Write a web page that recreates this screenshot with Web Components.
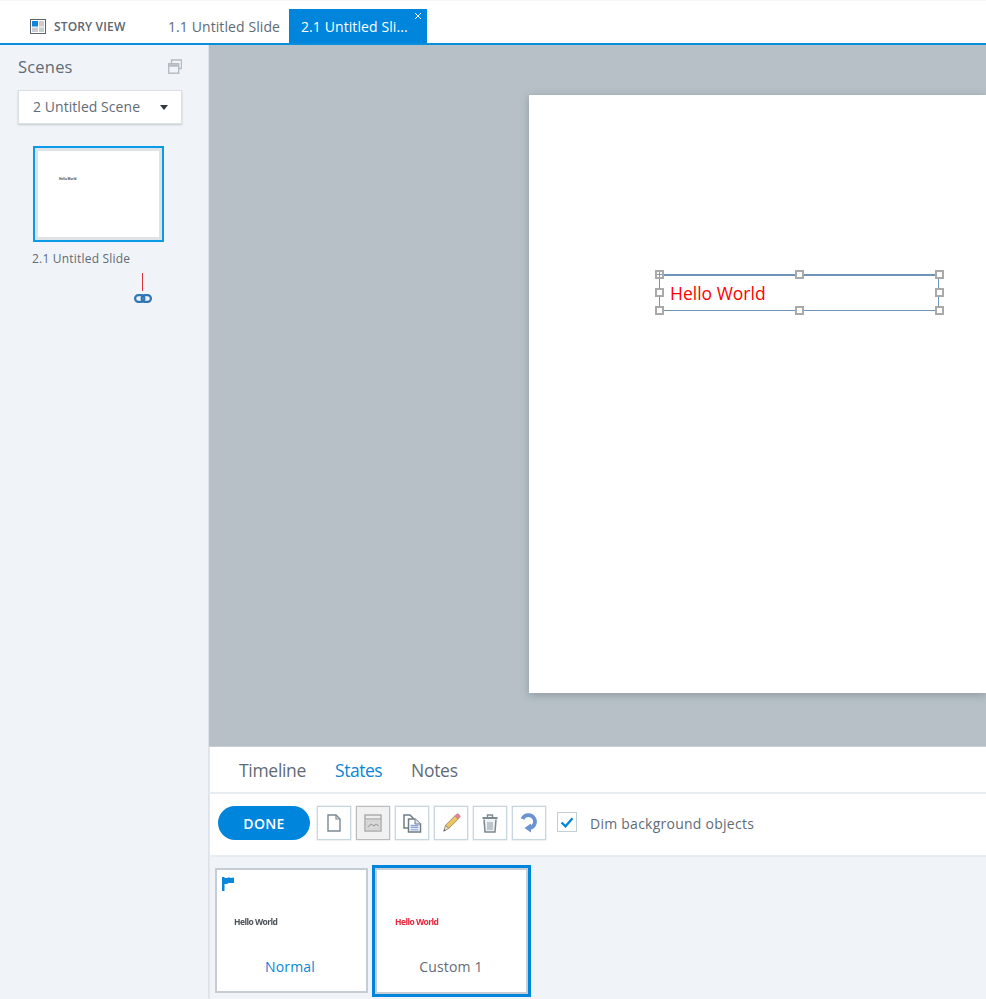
<!doctype html>
<html>
<head>
<meta charset="utf-8">
<style>
html,body{margin:0;height:100%;overflow:hidden;}
body{font-family:"Open Sans","Noto Sans",sans-serif;color:#5f6b76;background:#fff;}
story-app{width:986px;height:999px;}
</style>
</head>
<body>
<story-app>
  <story-tabs slot="tabs"></story-tabs>
  <scene-panel slot="side"></scene-panel>
  <slide-stage slot="stage"></slide-stage>
  <states-panel slot="bottom"></states-panel>
</story-app>

<script>
let define= (name,html)=>{
  customElements.define(name,class extends HTMLElement{
    constructor(){
      super();
      this.attachShadow({mode:"open"});
      let t= document.createElement("template");
      t.innerHTML= html;
      this.shadowRoot.append(t.content.cloneNode(true));
    }
  });
};

define("story-app",`
<style>
:host{display:grid;grid-template-columns:209px 1fr;grid-template-rows:45px 701px 1fr;}
</style>
<slot name="tabs"></slot>
<slot name="side"></slot>
<slot name="stage"></slot>
<slot name="bottom"></slot>
`);

define("story-tabs",`
<style>
:host{display:flex;grid-column:1/3;height:43px;border-bottom:2px solid #0a8fdf;align-items:flex-end;background:#fff;box-shadow:inset 0 1px 0 #f4f6f8;}
.story{display:flex;align-items:center;gap:8px;height:34px;margin-left:30px;width:138px;font-size:12px;font-weight:600;color:#5a6670;white-space:nowrap;letter-spacing:.15px;}
.tab{height:34px;display:flex;align-items:center;font-size:14px;white-space:nowrap;letter-spacing:.09px;}
.off{width:121px;}
.on{width:126px;padding-left:12px;background:#0085dd;color:#fff;position:relative;}
.x{position:absolute;right:5px;top:3px;width:8px;height:8px;}
svg{display:block;}
</style>
<div class="story">
<svg width="16" height="15" viewBox="0 0 16 15"><rect x=".5" y=".5" width="15" height="14" fill="#fff" stroke="#5c6268"/><rect x="2" y="2" width="6" height="5.500" fill="#0b86dc"/><rect x="9" y="2" width="5" height="5.500" fill="#c9cdd1"/><rect x="2" y="8.500" width="6" height="4.500" fill="#c9cdd1"/><rect x="9" y="8.500" width="5" height="4.500" fill="#c9cdd1"/></svg>
<span>STORY VIEW</span>
</div>
<div class="tab off">1.1 Untitled Slide</div>
<div class="tab on">2.1 Untitled Sli...
<svg class="x" viewBox="0 0 8 8"><path d="M1 1l6 6M7 1L1 7" stroke="#fff" stroke-width="1" fill="none"/></svg>
</div>
`);

define("scene-panel",`
<style>
:host{display:block;grid-row:2/4;background:#f0f4f8;box-shadow:inset -1px 0 0 #dde3e8;padding-top:9px;box-sizing:border-box;}
.head{display:flex;justify-content:space-between;align-items:center;height:24px;padding:0 27px 0 18px;font-size:16.500px;letter-spacing:.2px;}
.drop{display:flex;justify-content:space-between;align-items:center;margin:12px 27px 0 18px;height:34px;box-sizing:border-box;padding:0 13px 1px 14px;background:#fff;border:1px solid #dbe0e4;box-shadow:0 1px 2px rgba(90,100,110,.3);font-size:14px;letter-spacing:.05px;}
.arrow{width:0;height:0;border:4.500px solid transparent;border-top:5px solid #33383d;border-bottom:0;margin-top:2px;}
.thumb{margin:22px 0 0 33px;width:131px;height:96px;box-sizing:border-box;border:2px solid #0a9be8;background:#fff;box-shadow:inset 0 0 0 3px #dfe3e6;padding:29px 0 0 24px;}
.thumb span{display:block;font-size:3px;line-height:4px;font-weight:700;color:#444;white-space:nowrap;}
.name{margin:9px 0 0 32px;font-size:12px;line-height:16px;letter-spacing:.2px;white-space:nowrap;}
.link{margin:6px 0 0 134px;width:18px;}
.line{width:1px;height:18px;background:#d9303a;margin:0 0 3px 8px;}
svg{display:block;}
</style>
<div class="head"><span>Scenes</span>
<svg width="14" height="15" viewBox="0 0 14 15" fill="none"><path d="M3.500 4V1h10v8.500H11" stroke="#b4bbc2" stroke-width="1.400"/><rect x=".7" y="4.700" width="10" height="9.500" fill="#f0f4f8" stroke="#b4bbc2" stroke-width="1.400"/><path d="M1 6.500h9.500" stroke="#b4bbc2" stroke-width="2.500"/></svg>
</div>
<div class="drop"><span>2 Untitled Scene</span><i class="arrow"></i></div>
<div class="thumb"><span>Hello World</span></div>
<div class="name">2.1 Untitled Slide</div>
<div class="link"><div class="line"></div>
<svg width="18" height="9" viewBox="0 0 18 9" fill="none" stroke="#2e75b6" stroke-width="2.200"><rect x="1.100" y="1.100" width="9.300" height="6.800" rx="3.400"/><rect x="7.600" y="1.100" width="9.300" height="6.800" rx="3.400"/></svg>
</div>
`);

define("sel-handle",`
<style>
:host{position:absolute;width:5px;height:5px;border:2px solid #a9a9a9;background:#fff;margin:-4px 0 0 -4px;left:var(--x);top:var(--y);}
:host([cross]){background:linear-gradient(#7b9bb8,#7b9bb8) 0 2px/100% 1px no-repeat,linear-gradient(#7b9bb8,#7b9bb8) 2px 0/1px 100% no-repeat,#fff;}
</style>
`);

define("slide-stage",`
<style>
:host{display:flex;background:#b6c0c6;padding:50px 0 53px 320px;box-sizing:border-box;min-width:0;overflow:hidden;}
.slide{flex:1;background:#fff;position:relative;box-shadow:0 2px 8px rgba(90,105,115,.45);}
.box{position:absolute;left:130px;top:179px;width:280px;height:37px;box-sizing:border-box;border:1px solid #6f94b8;border-top-width:2px;color:#f00;font-size:17.500px;display:flex;align-items:center;padding-left:10px;}
</style>
<div class="slide">
<div class="box">Hello World
<sel-handle cross style="--x:-1px;--y:-2px"></sel-handle>
<sel-handle style="--x:139px;--y:-2px"></sel-handle>
<sel-handle style="--x:279px;--y:-2px"></sel-handle>
<sel-handle style="--x:-1px;--y:16px"></sel-handle>
<sel-handle style="--x:279px;--y:16px"></sel-handle>
<sel-handle style="--x:-1px;--y:34px"></sel-handle>
<sel-handle style="--x:139px;--y:34px"></sel-handle>
<sel-handle style="--x:279px;--y:34px"></sel-handle>
</div>
</div>
`);

define("tool-button",`
<style>
:host{display:flex;width:34px;height:34px;box-sizing:border-box;border:1px solid #c8d6dd;align-items:center;justify-content:center;background:#fff;box-shadow:0 0 0 .5px #dbe4e9;}
:host([pressed]){background:#f1f1f1;border-color:#bcbcbc;}
</style>
<slot></slot>
`);

define("state-thumb",`
<style>
:host{display:block;position:relative;box-sizing:border-box;background:#fff;border:2px solid #c5ccd3;width:153px;height:125px;margin-top:3px;text-align:center;}
:host([selected]){width:159px;height:132px;margin:0 0 0 4px;border:3px solid #0085dd;box-shadow:inset 0 0 0 2px #c9ced3;}
.mini{position:absolute;left:17px;top:46px;font-size:8.500px;line-height:12px;font-weight:700;letter-spacing:-.55px;color:#4d5258;filter:blur(.5px);white-space:nowrap;}
:host([selected]) .mini{left:20px;top:48px;color:#e8273c;}
.label{position:absolute;left:0;right:3px;bottom:14px;font-size:14px;line-height:20px;letter-spacing:.15px;color:var(--label,#5f6b76);}
:host([selected]) .label{bottom:17px;right:1px;}
</style>
<slot name="flag"></slot>
<div class="mini">Hello World</div>
<div class="label"><slot></slot></div>
`);

define("states-panel",`
<style>
:host{display:flex;flex-direction:column;background:#fff;min-width:0;box-shadow:inset 1px 0 0 #e3e8ec;border-top:1px solid #c9ced6;box-sizing:border-box;}
.tabs{display:flex;gap:29px;height:47px;padding-left:30px;align-items:center;font-size:17.500px;letter-spacing:-.3px;box-sizing:border-box;border-bottom:2px solid #e6ecf0;flex:none;}
.tabs .on{color:#0a86d8;letter-spacing:-.5px;}
.bar{display:flex;align-items:flex-start;height:63px;flex:none;box-sizing:border-box;padding:12px 0 0 9px;gap:5px;border-bottom:2px solid #e6ecf0;}
.done{width:92px;height:34px;border-radius:17px;background:#0085dd;color:#fff;font-size:14px;font-weight:600;display:flex;align-items:center;justify-content:center;margin-right:2px;letter-spacing:.3px;}
.check{width:20px;height:20px;box-sizing:border-box;border:1px solid #c3d0d8;background:#fff;margin:6px 8px 0 6px;display:flex;align-items:center;justify-content:center;}
.dim{font-size:14px;line-height:36px;letter-spacing:.25px;white-space:nowrap;}
.states{flex:1;background:#f0f4f8;display:flex;align-items:flex-start;padding:8px 0 0 6px;box-shadow:inset 1px 0 0 #e3e8ec;}
.flag{position:absolute;left:5px;top:7px;}
svg{display:block;}
</style>
<div class="tabs"><span>Timeline</span><span class="on">States</span><span>Notes</span></div>
<div class="bar">
<div class="done">DONE</div>
<tool-button>
<svg width="14" height="18" viewBox="0 0 14 18" fill="none"><path d="M1 1h8l4 4v12H1z" stroke="#7c8991" stroke-width="1.400" fill="#fff"/><path d="M9 1v4h4" stroke="#7c8991" stroke-width="1.200"/></svg>
</tool-button>
<tool-button pressed>
<svg width="18" height="18" viewBox="0 0 18 18" fill="none"><rect x="1" y="1" width="16" height="16" stroke="#a8a8a8" stroke-width="1.400" fill="#eee"/><path d="M1 5h16" stroke="#a8a8a8" stroke-width="1.300"/><rect x="3" y="7" width="12" height="8" fill="#dedede" stroke="#c6c6c6"/><path d="M4 13l3-3 3 2 2-2 2.500 2" stroke="#a3a3a3" stroke-width="1.200"/></svg>
</tool-button>
<tool-button>
<svg width="19" height="19" viewBox="0 0 19 19" fill="none"><path d="M1 1h6l3 3v10H1z" fill="#fff" stroke="#6f7c84" stroke-width="1.500"/><path d="M5.500 5H12l5.500 5v8H5.500z" fill="#fff" stroke="#6f7c84" stroke-width="1.500"/><path d="M12 5v5h5.500" fill="#dfe5f5" stroke="#6f7c84"/><path d="M7.500 11.500h8M7.500 13.500h8M7.500 15.800h8" stroke="#8ea3d6" stroke-width="1.300"/></svg>
</tool-button>
<tool-button>
<svg width="20" height="20" viewBox="0 0 22 22" fill="none"><path d="M5 13.500L15.500 3l3.500 3.500L8.500 17z" fill="#f2c55c" stroke="#8f8a78"/><path d="M15.500 3l1.500-1.500a1.800 1.800 0 0 1 2.500 0l1 1a1.800 1.800 0 0 1 0 2.500L19 6.500z" fill="#ee7f96" stroke="#b9808c" stroke-width=".8"/><path d="M5 13.500L3 20l5.500-3z" fill="#f0e2c4" stroke="#8f8a78"/><path d="M3.700 17.800L3 20l2.300-.8z" fill="#555"/></svg>
</tool-button>
<tool-button>
<svg width="16" height="19" viewBox="0 0 16 19" fill="none"><path d="M.5 4h15" stroke="#7c8991" stroke-width="2"/><path d="M5.500 3.500V1h5v2.500" stroke="#7c8991" stroke-width="1.400"/><path d="M2 5.500l1 12.500h10l1-12.500" fill="#eef1f3" stroke="#7c8991" stroke-width="1.500"/><path d="M6 8v8M8 8v8M10 8v8" stroke="#98a3aa" stroke-width="1.100"/></svg>
</tool-button>
<tool-button>
<svg width="18" height="20" viewBox="0 0 18 20" fill="none"><path d="M2.500 6A6.500 6.500 0 1 1 9.500 15" stroke="#6b93d2" stroke-width="3.800"/><path d="M11 10.500v9L4.500 15z" fill="#6b93d2"/></svg>
</tool-button>
<div class="check"><svg width="14" height="11" viewBox="0 0 14 11" fill="none"><path d="M1.500 5.500l4 3.800 7-8" stroke="#0085dd" stroke-width="2.200"/></svg></div>
<span class="dim">Dim background objects</span>
</div>
<div class="states">
<state-thumb style="--label:#0a86d8">
<svg slot="flag" class="flag" width="12" height="14" viewBox="0 0 12 14"><path d="M0 0h2.500v14H0zM2.500 1h3l1.500-1 1 1 4-.5v5.500H6.500L5 7H2.500z" fill="#0a86dc"/></svg>
Normal</state-thumb>
<state-thumb selected>Custom 1</state-thumb>
</div>
`);
</script>
</body>
</html>
